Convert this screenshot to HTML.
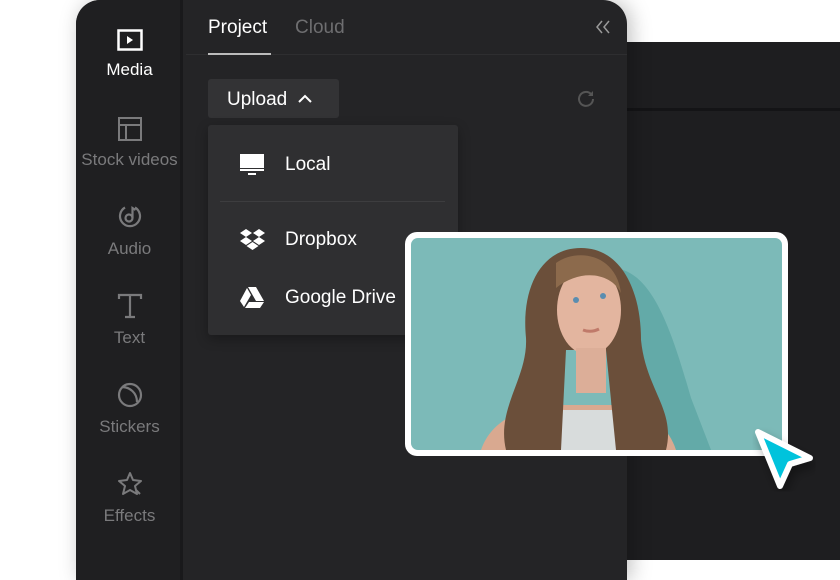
<!DOCTYPE html>
<html><head><meta charset="utf-8"><style>
*{margin:0;padding:0;box-sizing:border-box}
body{width:840px;height:560px;background:#fff;position:relative;overflow:hidden;font-family:"Liberation Sans",sans-serif}
.right{position:absolute;left:600px;top:42px;width:240px;height:518px;background:#1e1e20}
.right .hd{position:absolute;left:0;top:66px;width:240px;height:3px;background:#141416}
.panel{position:absolute;left:76px;top:0;width:551px;height:580px;background:#242426;border-radius:24px 24px 0 0;overflow:hidden;box-shadow:4px 0 20px rgba(0,0,0,.25)}
.side{position:absolute;left:0;top:0;width:107px;height:100%;background:#1f1f21;border-right:3px solid #19191b}
.item{position:absolute;left:0;width:107px;text-align:center;color:#7a7a7c;font-size:17px}
.item svg{display:block;margin:0 auto 9px}
.main{position:absolute;left:110px;top:0;right:0;height:100%}
.tabs{position:absolute;left:0;top:0;right:0;height:55px;border-bottom:1px solid #2e2e30}
.tab{position:absolute;top:17px;font-size:19px}
.upload{position:absolute;left:22px;top:79px;width:131px;height:39px;background:#333335;border-radius:3px;color:#fff;font-size:19px;padding:10px 0 0 19px}
.menu{position:absolute;left:22px;top:125px;width:250px;height:210px;background:#2f2f31;border-radius:3px;box-shadow:0 4px 12px rgba(0,0,0,.3)}
.mi{position:absolute;left:77px;color:#fff;font-size:19px}
.card{position:absolute;left:405px;top:232px;width:383px;height:224px;background:#fff;border-radius:12px;padding:6px}
.photo{width:100%;height:100%;border-radius:7px;background:#7cbab8;overflow:hidden;position:relative}
</style></head><body>
<div class="right"><div class="hd"></div></div>
<div class="panel">
 <div class="side">
  <div class="item" style="top:29px;color:#fff"><svg width="26" height="22" viewBox="0 0 26 22"><rect x="1.5" y="1.5" width="23" height="19" fill="none" stroke="#fff" stroke-width="2.5"/><path d="M10 7l6 4-6 4z" fill="#fff"/></svg>Media</div>
  <div class="item" style="top:117px"><svg width="24" height="24" viewBox="0 0 24 24"><rect x="1" y="1" width="22" height="22" fill="none" stroke="#7a7a7c" stroke-width="2"/><path d="M1 8h22M8 8v15" stroke="#7a7a7c" stroke-width="2"/></svg>Stock videos</div>
  <div class="item" style="top:204px"><svg width="26" height="26" viewBox="0 0 26 26"><path d="M8 3.5A10 10 0 1 0 18 3.5" fill="none" stroke="#7a7a7c" stroke-width="2.2"/><circle cx="12" cy="14" r="3.5" fill="none" stroke="#7a7a7c" stroke-width="2.2"/><path d="M15.5 14V4l3 2" fill="none" stroke="#7a7a7c" stroke-width="2.2"/></svg>Audio</div>
  <div class="item" style="top:293px"><svg width="26" height="26" viewBox="0 0 26 26"><path d="M2 6V2h22v4M13 2v22M8 24h10" fill="none" stroke="#7a7a7c" stroke-width="2.2"/></svg>Text</div>
  <div class="item" style="top:382px"><svg width="26" height="26" viewBox="0 0 26 26"><circle cx="13" cy="13" r="11" fill="none" stroke="#7a7a7c" stroke-width="2.2"/><path d="M5 5c8 0 15 6 15 15" fill="none" stroke="#7a7a7c" stroke-width="2.2"/></svg>Stickers</div>
  <div class="item" style="top:471px"><svg width="28" height="26" viewBox="0 0 28 26"><path d="M14 2l3 7 8 1-6 5 2 8-7-4-7 4 2-8-6-5 8-1z" fill="none" stroke="#7a7a7c" stroke-width="2" stroke-linejoin="round"/><path d="M20 19l4 4" stroke="#7a7a7c" stroke-width="2"/></svg>Effects</div>
 </div>
 <div class="main">
  <div class="tabs">
   <div class="tab" style="left:22px;color:#fff">Project</div>
   <div class="tab" style="left:109px;color:#6e6e70">Cloud</div>
   <div style="position:absolute;left:22px;top:53px;width:63px;height:2px;background:#bbb"></div>
   <svg style="position:absolute;left:409px;top:19px" width="16" height="16" viewBox="0 0 16 16"><path d="M7 2L2 8l5 6M14 2L9 8l5 6" fill="none" stroke="#999" stroke-width="1.5"/></svg>
  </div>
  <div class="upload">Upload <svg width="16" height="12" viewBox="0 0 16 12" style="margin-left:4px"><path d="M2 9l6-6 6 6" fill="none" stroke="#fff" stroke-width="2"/></svg></div>
  <svg style="position:absolute;left:389px;top:88px" width="22" height="22" viewBox="0 0 22 22"><path d="M18 11a7 7 0 1 1-2-5" fill="none" stroke="#555" stroke-width="2"/><path d="M18 3v5h-5z" fill="#555"/></svg>
  <div class="menu">
   <svg style="position:absolute;left:32px;top:29px" width="24" height="22" viewBox="0 0 24 22"><rect x="0" y="0" width="24" height="14" fill="#fff"/><rect x="0" y="15" width="24" height="2" fill="#fff"/><rect x="8" y="19" width="8" height="2" fill="#fff"/></svg>
   <div class="mi" style="top:29px">Local</div>
   <div style="position:absolute;left:12px;top:76px;width:225px;height:1px;background:#3d3d3f"></div>
   <svg style="position:absolute;left:32px;top:104px" width="25" height="22" viewBox="0 0 25 22"><path d="M6 0l6 4-6 4-6-4zM19 0l6 4-6 4-6-4zM6 8l6 4-6 4-6-4zM19 8l6 4-6 4-6-4zM12.5 13l6 4-6 4-6-4z" fill="#fff"/></svg>
   <div class="mi" style="top:104px">Dropbox</div>
   <svg style="position:absolute;left:32px;top:162px" width="24" height="21" viewBox="0 0 24 21"><path d="M8 0h8l8 14h-8zM7 1l4 7-7 12-4-6zM9 15h15l-4 6H5z" fill="#fff"/></svg>
   <div class="mi" style="top:162px">Google Drive</div>
  </div>
 </div>
</div>
<div class="card"><div class="photo">
 <svg width="371" height="212" viewBox="0 0 371 212">
  <path d="M200 30c40 0 60 60 80 130l20 52H200z" fill="#4a9a98" opacity=".5"/>
  <path d="M70 212c10-30 40-40 60-45h70c30 5 55 15 65 45z" fill="#d9a990"/>
  <path d="M120 212l15-40h80l15 40z" fill="#d8dcdc"/>
  <path d="M170 10c-40 0-60 40-55 90 2 40-30 70-20 112h55l5-100h40l10 100h50c10-40-20-60-25-110 0-50-20-92-60-92z" fill="#6b4f3a"/>
  <ellipse cx="178" cy="72" rx="32" ry="45" fill="#e3b59f"/>
  <path d="M165 110h30v45h-30z" fill="#dcae98"/>
  <path d="M145 25c20-15 60-10 65 30-10-20-40-25-65-5z" fill="#8c6a4c"/>
  <circle cx="165" cy="62" r="3" fill="#5a8db0"/><circle cx="192" cy="58" r="3" fill="#5a8db0"/>
  <path d="M172 92q8 3 16-1" stroke="#c07a6a" stroke-width="3" fill="none"/>
 </svg>
</div></div>
<svg style="position:absolute;left:748px;top:424px" width="70" height="72" viewBox="0 0 70 72">
 <defs><filter id="s"><feDropShadow dx="3" dy="6" stdDeviation="5" flood-opacity=".35"/></filter></defs>
 <path d="M10 8l52 26-20 6-10 22z" fill="#00c3dc" stroke="#fff" stroke-width="6" stroke-linejoin="round" filter="url(#s)"/>
</svg>
</body></html>
